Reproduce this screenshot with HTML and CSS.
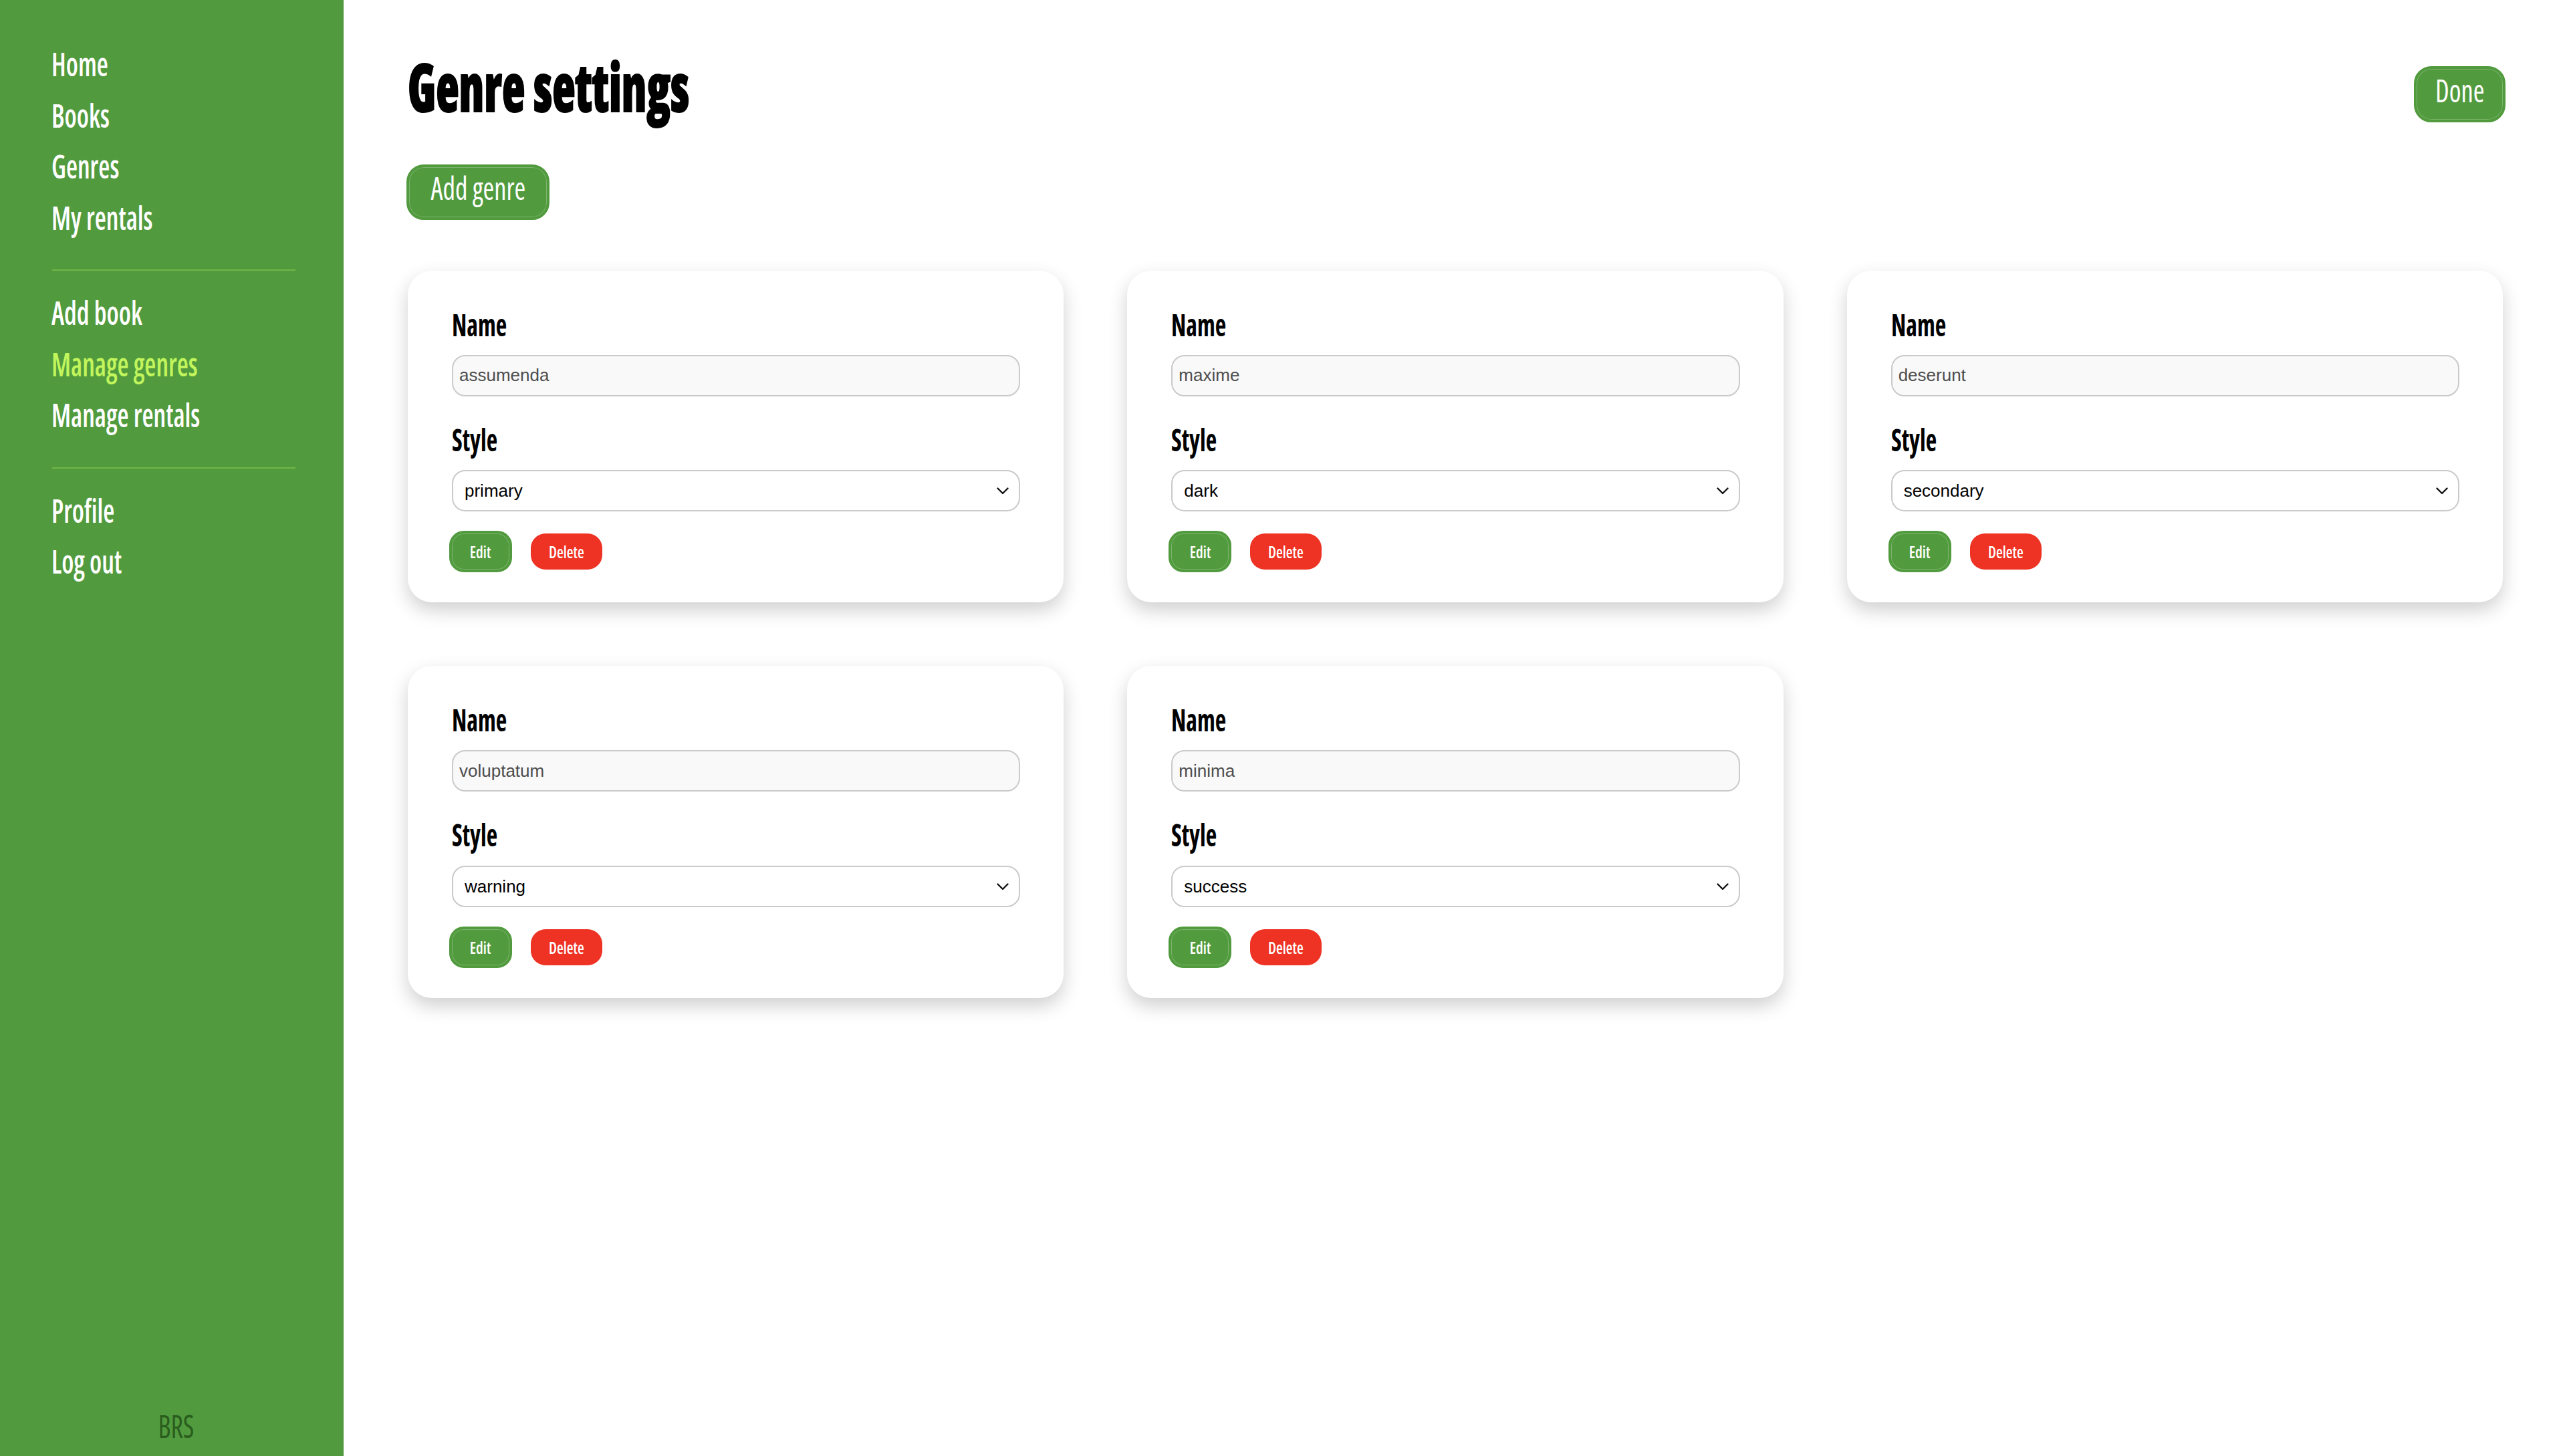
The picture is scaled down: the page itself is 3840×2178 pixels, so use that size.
FILE: index.html
```html
<!DOCTYPE html>
<html lang="en">
<head>
<meta charset="utf-8">
<title>Genre settings</title>
<link rel="stylesheet" href="styles.css">
</head>
<body>
<div class="layout">
  <aside class="sidebar">
    <nav class="nav">
      <ul class="nav-group">
        <li><a class="nav-link" href="#">Home</a></li>
        <li><a class="nav-link" href="#">Books</a></li>
        <li><a class="nav-link" href="#">Genres</a></li>
        <li><a class="nav-link" href="#">My rentals</a></li>
      </ul>
      <hr class="nav-divider">
      <ul class="nav-group">
        <li><a class="nav-link" href="#">Add book</a></li>
        <li><a class="nav-link active" href="#">Manage genres</a></li>
        <li><a class="nav-link" href="#">Manage rentals</a></li>
      </ul>
      <hr class="nav-divider">
      <ul class="nav-group">
        <li><a class="nav-link" href="#">Profile</a></li>
        <li><a class="nav-link" href="#">Log out</a></li>
      </ul>
    </nav>
    <div class="brand"><span class="brand-text">BRS</span></div>
  </aside>

  <main class="main">
    <header class="page-header">
      <h1 class="page-title">Genre settings</h1>
      <button class="btn btn-green btn-lg btn-done"><span class="btn-text">Done</span></button>
    </header>
    <button class="btn btn-green btn-lg btn-add"><span class="btn-text">Add genre</span></button>

    <section class="cards">
      <div class="card">
        <label class="field-label">Name</label>
        <input class="field-input" type="text" value="assumenda">
        <label class="field-label">Style</label>
        <div class="select-wrap">
          <select class="field-select"><option>primary</option></select>
          <svg class="chevron" viewBox="0 0 18 11"><path d="M1.5 1.5 L9 9 L16.5 1.5" fill="none" stroke="#111" stroke-width="2.4" stroke-linecap="round" stroke-linejoin="round"/></svg>
        </div>
        <div class="card-actions">
          <button class="btn btn-green btn-sm btn-edit"><span class="btn-text">Edit</span></button>
          <button class="btn btn-red btn-sm btn-delete"><span class="btn-text">Delete</span></button>
        </div>
      </div>

      <div class="card">
        <label class="field-label">Name</label>
        <input class="field-input" type="text" value="maxime">
        <label class="field-label">Style</label>
        <div class="select-wrap">
          <select class="field-select"><option>dark</option></select>
          <svg class="chevron" viewBox="0 0 18 11"><path d="M1.5 1.5 L9 9 L16.5 1.5" fill="none" stroke="#111" stroke-width="2.4" stroke-linecap="round" stroke-linejoin="round"/></svg>
        </div>
        <div class="card-actions">
          <button class="btn btn-green btn-sm btn-edit"><span class="btn-text">Edit</span></button>
          <button class="btn btn-red btn-sm btn-delete"><span class="btn-text">Delete</span></button>
        </div>
      </div>

      <div class="card">
        <label class="field-label">Name</label>
        <input class="field-input" type="text" value="deserunt">
        <label class="field-label">Style</label>
        <div class="select-wrap">
          <select class="field-select"><option>secondary</option></select>
          <svg class="chevron" viewBox="0 0 18 11"><path d="M1.5 1.5 L9 9 L16.5 1.5" fill="none" stroke="#111" stroke-width="2.4" stroke-linecap="round" stroke-linejoin="round"/></svg>
        </div>
        <div class="card-actions">
          <button class="btn btn-green btn-sm btn-edit"><span class="btn-text">Edit</span></button>
          <button class="btn btn-red btn-sm btn-delete"><span class="btn-text">Delete</span></button>
        </div>
      </div>

      <div class="card">
        <label class="field-label">Name</label>
        <input class="field-input" type="text" value="voluptatum">
        <label class="field-label">Style</label>
        <div class="select-wrap">
          <select class="field-select"><option>warning</option></select>
          <svg class="chevron" viewBox="0 0 18 11"><path d="M1.5 1.5 L9 9 L16.5 1.5" fill="none" stroke="#111" stroke-width="2.4" stroke-linecap="round" stroke-linejoin="round"/></svg>
        </div>
        <div class="card-actions">
          <button class="btn btn-green btn-sm btn-edit"><span class="btn-text">Edit</span></button>
          <button class="btn btn-red btn-sm btn-delete"><span class="btn-text">Delete</span></button>
        </div>
      </div>

      <div class="card">
        <label class="field-label">Name</label>
        <input class="field-input" type="text" value="minima">
        <label class="field-label">Style</label>
        <div class="select-wrap">
          <select class="field-select"><option>success</option></select>
          <svg class="chevron" viewBox="0 0 18 11"><path d="M1.5 1.5 L9 9 L16.5 1.5" fill="none" stroke="#111" stroke-width="2.4" stroke-linecap="round" stroke-linejoin="round"/></svg>
        </div>
        <div class="card-actions">
          <button class="btn btn-green btn-sm btn-edit"><span class="btn-text">Edit</span></button>
          <button class="btn btn-red btn-sm btn-delete"><span class="btn-text">Delete</span></button>
        </div>
      </div>
    </section>
  </main>
</div>
</body>
</html>
```

FILE: styles.css
```css
* { box-sizing: border-box; }

html, body {
  margin: 0;
  padding: 0;
  background: #ffffff;
}

body {
  font-family: "Open Sans", "Roboto Condensed", sans-serif;
  font-stretch: 75%;
  color: #000;
}

.layout {
  display: flex;
  min-height: 2178px;
}

/* Sidebar */
.sidebar {
  width: 514px;
  flex: 0 0 514px;
  background: #519b3e;
  display: flex;
  flex-direction: column;
  padding: 57px 72px 17px 77px;
}

.nav-group {
  list-style: none;
  margin: 0;
  padding: 0;
}

.nav-link {
  display: block;
  font-size: 49px;
  font-weight: 600;
  line-height: 76.5px;
  color: #ffffff;
  text-decoration: none;
  white-space: nowrap;
  transform: scaleX(0.8);
  transform-origin: left center;
}

.nav-link.active {
  color: #c2f55c;
}

.nav-divider {
  border: 0;
  height: 2px;
  background: #72b548;
  margin: 40px 0 24px 1px;
}

.brand {
  margin-top: auto;
  text-align: center;
  font-size: 47px;
  font-weight: 500;
  line-height: 56px;
  color: #2a5d1d;
  margin-right: -8px;
}

.brand-text {
  display: inline-block;
  transform: scaleX(0.86);
}

/* Main */
.main {
  flex: 1;
  padding: 70px 96px 0 96px;
}

.page-header {
  display: flex;
  justify-content: space-between;
  align-items: flex-start;
}

.page-title {
  margin: 0;
  font-size: 99px;
  font-weight: 800;
  line-height: 1.2;
  white-space: nowrap;
  -webkit-text-stroke: 2px #000;
  transform: scaleX(0.72);
  transform-origin: left center;
}

/* Buttons */
.btn {
  display: inline-flex;
  align-items: center;
  justify-content: center;
  font-family: "Open Sans", "Roboto Condensed", sans-serif;
  font-stretch: 75%;
  color: #ffffff;
  cursor: pointer;
  border: 0;
  padding: 0;
  white-space: nowrap;
}

.btn-text {
  display: inline-block;
}

.btn-green {
  background: #519b3e;
  border: 4px solid #519b3e;
  box-shadow: inset 0 0 0 1px rgba(255, 255, 255, 0.25);
}

.btn-red {
  background: #ee3224;
}

.btn-lg {
  font-size: 47px;
  font-weight: 500;
  line-height: 56px;
  height: 84px;
  padding-bottom: 12px;
  border-radius: 26px;
}

.btn-lg .btn-text {
  transform: scaleX(0.86);
}

.btn-done {
  width: 137px;
  margin-top: 29px;
  margin-right: -4px;
}

.btn-add {
  width: 214px;
  height: 83px;
  margin-top: 57px;
  margin-left: -2px;
}

.btn-sm {
  font-size: 25px;
  font-weight: 600;
  line-height: 30px;
  border-radius: 22px;
}

.btn-sm .btn-text {
  transform: scaleX(0.9);
}

.btn-edit {
  width: 94px;
  height: 62px;
  margin-left: -4px;
}

.btn-delete {
  width: 107px;
  height: 54px;
}

/* Cards */
.cards {
  margin-top: 76px;
  display: grid;
  grid-template-columns: repeat(3, 1fr);
  gap: 95px;
}

.card {
  background: #ffffff;
  border-radius: 36px;
  padding: 53px 65px 45px 66px;
  box-shadow: 0 12px 28px rgba(0, 0, 0, 0.19);
}

.field-label {
  display: block;
  font-size: 46px;
  font-weight: 700;
  line-height: 1.2;
  margin-bottom: 18px;
  transform: scaleX(0.78);
  transform-origin: left center;
}

.field-input {
  display: block;
  width: 100%;
  height: 62px;
  border: 2px solid #cacaca;
  border-radius: 20px;
  background: #f9f9f9;
  padding: 0 9px;
  font-family: "Liberation Sans", Arial, sans-serif;
  font-stretch: normal;
  font-size: 26px;
  color: #4d4d4d;
  margin-bottom: 37px;
  outline: none;
}

.select-wrap {
  position: relative;
  margin-bottom: 29px;
}

.field-select {
  display: block;
  width: 100%;
  height: 62px;
  -webkit-appearance: none;
  appearance: none;
  border: 2px solid #cacaca;
  border-radius: 20px;
  background: #ffffff;
  padding: 0 17px;
  font-family: "Liberation Sans", Arial, sans-serif;
  font-stretch: normal;
  font-size: 26px;
  color: #000;
  outline: none;
}

.chevron {
  position: absolute;
  right: 17px;
  top: 26px;
  width: 18px;
  height: 11px;
  pointer-events: none;
}

.card-actions {
  display: flex;
  align-items: center;
  gap: 28px;
}
```
